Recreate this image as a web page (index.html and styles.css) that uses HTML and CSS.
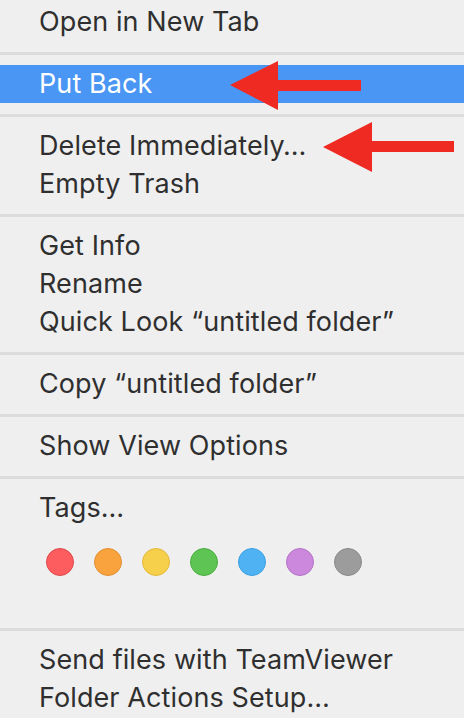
FILE: index.html
```html
<!DOCTYPE html>
<html>
<head>
<meta charset="utf-8">
<link rel="stylesheet" href="styles.css">
</head>
<body>
<div class="menu">
  <div class="item">Open in New Tab</div>
  <div class="sep"></div>
  <div class="item selected">Put Back</div>
  <div class="sep"></div>
  <div class="item">Delete Immediately…</div>
  <div class="item">Empty Trash</div>
  <div class="sep"></div>
  <div class="item">Get Info</div>
  <div class="item">Rename</div>
  <div class="item">Quick Look “untitled folder”</div>
  <div class="sep"></div>
  <div class="item">Copy “untitled folder”</div>
  <div class="sep"></div>
  <div class="item">Show View Options</div>
  <div class="sep"></div>
  <div class="item">Tags…</div>
  <div class="tags">
    <span class="dot red"></span>
    <span class="dot orange"></span>
    <span class="dot yellow"></span>
    <span class="dot green"></span>
    <span class="dot blue"></span>
    <span class="dot purple"></span>
    <span class="dot gray"></span>
  </div>
  <div class="sep"></div>
  <div class="item">Send files with TeamViewer</div>
  <div class="item">Folder Actions Setup…</div>
</div>
<svg class="arrow arrow-1" width="140" height="54" viewBox="0 0 140 54">
  <polygon points="0,24 48,0 48,19 131,19 131,30 48,30 48,49" />
</svg>
<svg class="arrow arrow-2" width="140" height="54" viewBox="0 0 140 54">
  <polygon points="0,25 49,0 49,19 131,19 131,30 49,30 49,50" />
</svg>
</body>
</html>
```
FILE: styles.css
```css
html, body {
  margin: 0;
  padding: 0;
  background: #efefef;
}
body {
  width: 464px;
  height: 718px;
  overflow: hidden;
  position: relative;
  font-family: Inter, "Noto Sans", "Liberation Sans", sans-serif;
}
.menu {
  display: flex;
  flex-direction: column;
  padding-top: 3px;
}
.item {
  height: 38px;
  line-height: 38px;
  padding-left: 39px;
  font-size: 27px;
  letter-spacing: 0.1px;
  color: #2f2f2f;
  white-space: nowrap;
}
.item.selected {
  background: #4a96f4;
  color: #ffffff;
}
.sep {
  height: 24px;
  display: flex;
  align-items: center;
}
.sep::before {
  content: "";
  display: block;
  width: 100%;
  height: 3px;
  background: #dcdcdc;
}
.tags {
  height: 90px;
  display: flex;
  align-items: flex-start;
  gap: 20px;
  padding-left: 46px;
  padding-top: 21px;
  box-sizing: border-box;
}
.dot {
  width: 28px;
  height: 28px;
  border-radius: 50%;
  box-sizing: border-box;
  border: 1.5px solid;
}
.red { background: #fd5d5f; border-color: #e0484b; }
.orange { background: #f9a33f; border-color: #e18f30; }
.yellow { background: #f6cf4b; border-color: #e2ba3b; }
.green { background: #5ec453; border-color: #49ad40; }
.blue { background: #4fb3f3; border-color: #3b9fe0; }
.purple { background: #cb88dc; border-color: #b473c6; }
.gray { background: #9c9c9c; border-color: #898989; }
.arrow {
  position: absolute;
  fill: #ee2a22;
}
.arrow-1 { left: 230px; top: 61px; }
.arrow-2 { left: 323px; top: 122px; }
```
